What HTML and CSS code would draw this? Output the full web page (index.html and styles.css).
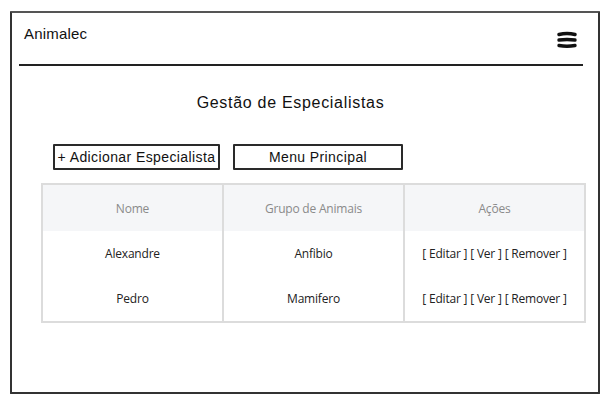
FILE: index.html
```html
<!DOCTYPE html>
<html lang="pt">
<head>
<meta charset="utf-8">
<title>Animalec</title>
<link rel="stylesheet" href="styles.css">
</head>
<body>
<div class="frame">
  <header class="topbar">
    <span class="brand">Animalec</span>
    <svg class="burger" width="22" height="18" viewBox="0 0 22 18" aria-hidden="true">
      <path d="M3 3.5 Q11 1.5 19 3.5" stroke="#111" stroke-width="3.4" stroke-linecap="round" fill="none"/>
      <path d="M3 9 Q11 8 19 9" stroke="#111" stroke-width="3.4" stroke-linecap="round" fill="none"/>
      <path d="M3 14.5 Q11 16 19 14.5" stroke="#111" stroke-width="3.4" stroke-linecap="round" fill="none"/>
    </svg>
  </header>
  <main class="content">
    <h1 class="title">Gestão de Especialistas</h1>
    <div class="actions">
      <button class="btn btn-add">+ Adicionar Especialista</button>
      <button class="btn btn-menu">Menu Principal</button>
    </div>
    <table class="grid">
      <thead>
        <tr><th>Nome</th><th>Grupo de Animais</th><th>Ações</th></tr>
      </thead>
      <tbody>
        <tr><td>Alexandre</td><td>Anfibio</td><td>[ Editar ] [ Ver ] [ Remover ]</td></tr>
        <tr><td>Pedro</td><td>Mamifero</td><td>[ Editar ] [ Ver ] [ Remover ]</td></tr>
      </tbody>
    </table>
  </main>
</div>
</body>
</html>
```

FILE: styles.css
```css
html, body {
  margin: 0;
  padding: 0;
  background: #fff;
}
body {
  font-family: "Liberation Sans", Arial, sans-serif;
  color: #111;
}
.frame {
  box-sizing: border-box;
  margin: 11px 0 0 10px;
  width: 590px;
  height: 383px;
  border: 2px solid #333;
  border-top-color: #555;
  border-radius: 1px;
}
.topbar {
  box-sizing: border-box;
  height: 53px;
  margin: 0 15px 0 7px;
  border-bottom: 2px solid #222;
  display: flex;
  justify-content: space-between;
  align-items: flex-start;
  padding: 12px 0 0 5px;
}
.brand {
  font-size: 15px;
  letter-spacing: 0.2px;
  color: #111;
}
.burger {
  margin-top: 6px;
  margin-right: 5px;
}
.content {
  display: flex;
  flex-direction: column;
  align-items: flex-start;
}
.title {
  align-self: stretch;
  text-align: center;
  font-weight: normal;
  font-size: 16px;
  margin: 28px 0 0 0;
  padding-right: 29px;
  letter-spacing: 0.7px;
  color: #111;
}
.actions {
  display: flex;
  gap: 13px;
  margin: 32px 0 0 41px;
}
.btn {
  box-sizing: border-box;
  height: 26px;
  background: #fff;
  border: 2px solid #2a2a2a;
  font-family: "Liberation Sans", Arial, sans-serif;
  font-size: 14px;
  letter-spacing: 0.4px;
  color: #111;
  padding: 0;
  border-radius: 1px;
}
.btn-add { width: 167px; }
.btn-menu { width: 170px; }
.grid {
  margin: 13px 0 0 29px;
  width: 545px;
  border-collapse: collapse;
  border: 2px solid #dcdcdc;
  font-family: "Open Sans", "Noto Sans", sans-serif;
  font-size: 12px;
  letter-spacing: -0.2px;
  table-layout: fixed;
}
.grid th, .grid td {
  border-left: 2px solid #dcdcdc;
  text-align: center;
  padding: 0;
}
.grid th:first-child, .grid td:first-child { border-left: none; }
.grid th {
  height: 46px;
  background: #f5f6f8;
  color: #8a8a8a;
  font-weight: normal;
}
.grid td {
  height: 45px;
  color: #222;
}
```
